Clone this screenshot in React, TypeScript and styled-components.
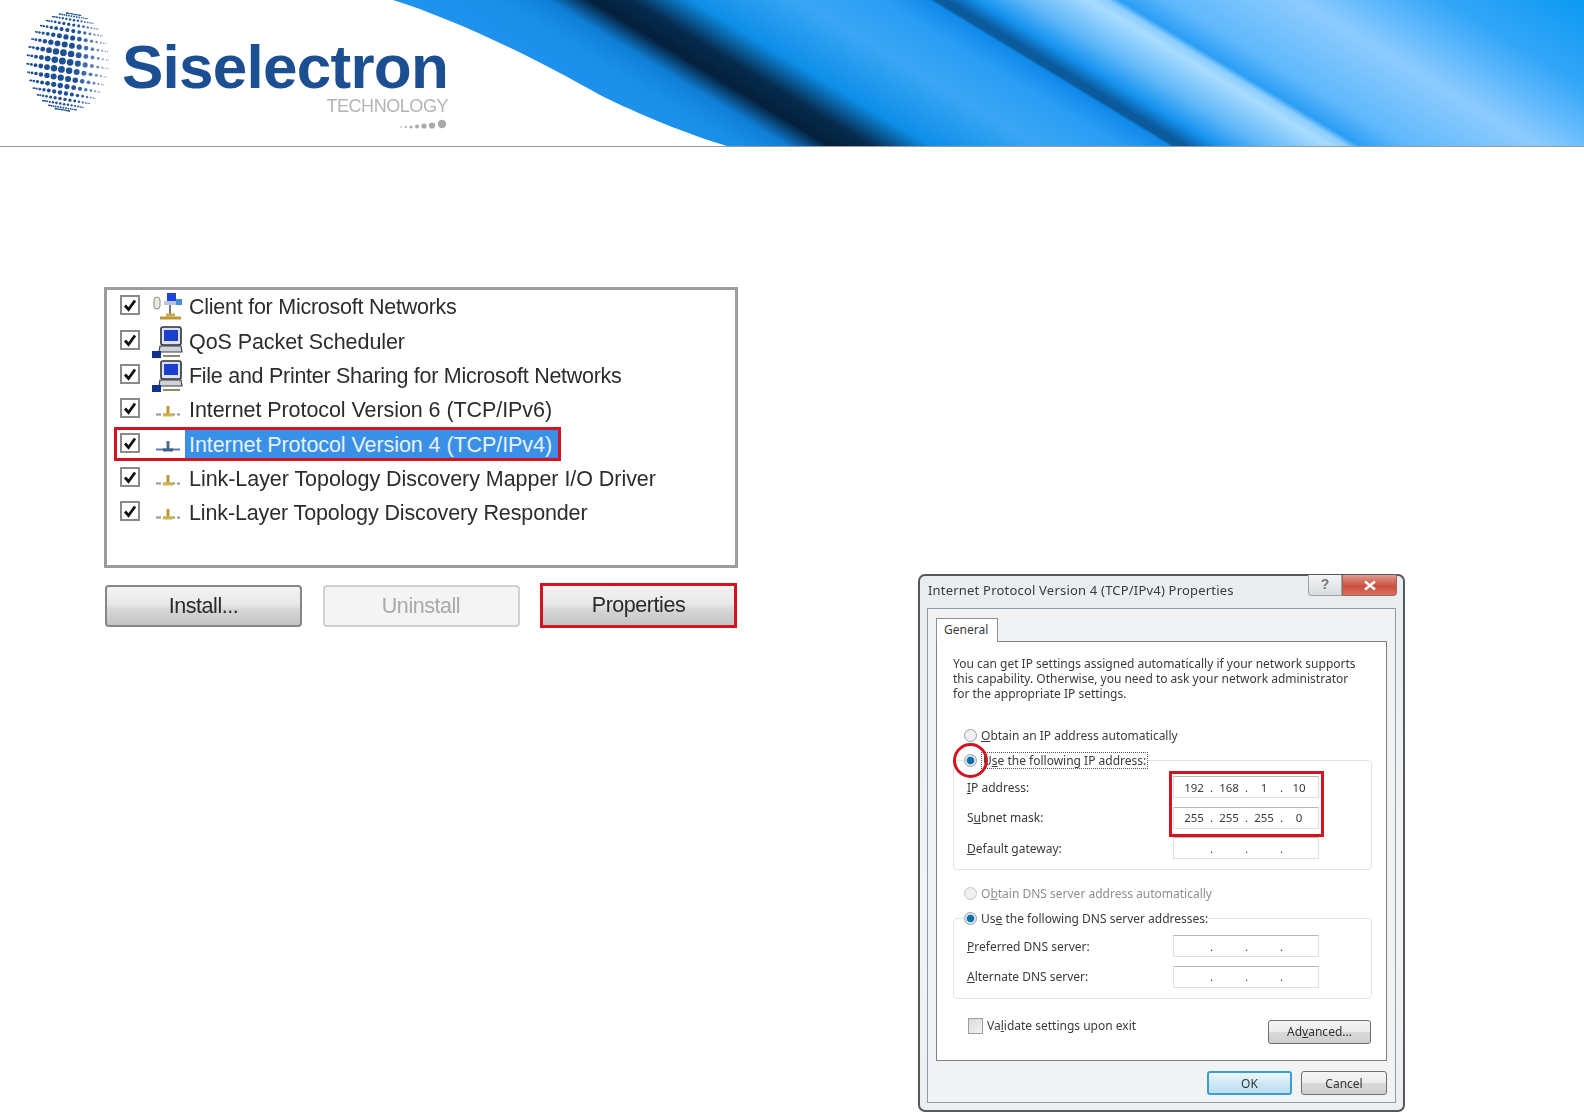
import React from "react";
import styled, { createGlobalStyle } from "styled-components";

const Global = createGlobalStyle`
  html, body { margin: 0; padding: 0; background: #fff; }
  body { width: 1584px; height: 1112px; overflow: hidden; font-family: "Liberation Sans", Arial, sans-serif; }
`;

const Page = styled.div`
  width: 1584px;
  height: 1112px;
  display: flex;
  flex-direction: column;
`;

const Banner = styled.header`
  position: relative;
  height: 146px;
  flex: none;
  display: flex;
  align-items: flex-start;
  padding-left: 26px;
  background: #fff;
  border-bottom: 1px solid #9a9a9a;
  overflow: hidden;
`;

const Swoosh = styled.svg`
  position: absolute;
  inset: 0;
  width: 1584px;
  height: 146px;
`;

const Logo = styled.div`
  position: relative;
  display: flex;
  align-items: flex-start;
  filter: blur(0.5px);
`;

const GlobeMark = styled.svg`
  flex: none;
  margin-top: 12px;
`;

const Brand = styled.div`
  display: flex;
  flex-direction: column;
  align-items: flex-end;
  margin-left: 10px;
  padding-top: 37px;
`;

const BrandName = styled.div`
  font: bold 62px/60px "Liberation Sans", Arial, sans-serif;
  letter-spacing: -0.75px;
  color: #1c4f92;
`;

const BrandSub = styled.div`
  font: 18px/18px "Liberation Sans", Arial, sans-serif;
  letter-spacing: -0.45px;
  color: #b4b4b4;
`;

const SmallDotsMark = styled.svg`
  margin-top: 2px;
`;

const Main = styled.main`
  display: flex;
  align-items: flex-start;
  padding-left: 104px;
`;

const LeftColumn = styled.section`
  width: 634px;
  flex: none;
  margin-top: 140px;
  filter: blur(0.45px);
`;

const ListBox = styled.div`
  box-sizing: border-box;
  height: 281px;
  border: 3px solid #9c9c9c;
  background: #fff;
`;

const Row = styled.div<{ $selected?: boolean; $track: number }>`
  position: relative;
  height: 34.35px;
  display: flex;
  align-items: center;
  padding-left: 13px;
  font-size: 21.5px;
  letter-spacing: ${(p) => p.$track}px;
  color: #2c2c2c;
  ${(p) =>
    p.$selected &&
    `&::after {
      content: "";
      position: absolute;
      left: 7px;
      top: 0;
      width: 447px;
      height: 34px;
      box-sizing: border-box;
      border: 3px solid #d3131f;
    }`}
`;

const ListCheck = styled.span`
  width: 20px;
  height: 20px;
  flex: none;
  box-sizing: border-box;
  border: 2px solid #8a8a8a;
  background: #fff;
  display: flex;
  align-items: center;
  justify-content: center;
  margin-top: -4px;
`;

const IconSlot = styled.span`
  width: 34px;
  height: 32px;
  margin-left: 11px;
  flex: none;
  display: flex;
  align-items: center;
  justify-content: center;
`;

const RowLabel = styled.span<{ $selected?: boolean }>`
  padding: ${(p) => (p.$selected ? "0 7px 0 4px" : "0 14px 0 4px")};
  line-height: 30px;
  white-space: nowrap;
  ${(p) => p.$selected && `background: #3a90e6; color: #e6f2ff;`}
`;

const ButtonRow = styled.div`
  display: flex;
  justify-content: space-between;
  margin-top: 17px;
  padding: 0 1px;
`;

const BigButton = styled.button<{ $disabled?: boolean; $marked?: boolean }>`
  width: 197px;
  height: 42px;
  padding: 0;
  box-sizing: border-box;
  border-radius: 4px;
  border: ${(p) => (p.$marked ? 3 : 2)}px solid
    ${(p) => (p.$marked ? "#d3131f" : p.$disabled ? "#d0d0d0" : "#868686")};
  ${(p) => p.$marked && `border-radius: 0; height: 45px; margin-top: -2px;`}
  background: ${(p) =>
    p.$disabled
      ? "#f4f4f4"
      : "linear-gradient(#f3f3f3 0%, #e8e8e8 45%, #d6d6d6 60%, #c4c4c4 100%)"};
  color: ${(p) => (p.$disabled ? "#a9a9a9" : "#2a2a2a")};
  font: 21.5px "Liberation Sans", Arial, sans-serif;
  letter-spacing: -0.45px;
`;

const Dialog = styled.section`
  width: 487px;
  height: 538px;
  box-sizing: border-box;
  flex: none;
  margin: 427px 0 0 180px;
  padding: 0 7px 9px;
  border: 2px solid #55595e;
  border-radius: 7px;
  background: linear-gradient(#e9edf0, #f3f4f5 60%, #eceef0);
  font: 12px "Noto Sans", sans-serif;
  color: #3a3a3a;
  filter: blur(0.4px);
`;

const TitleBar = styled.div`
  height: 32px;
  display: flex;
  justify-content: space-between;
  align-items: flex-start;
`;

const TitleText = styled.div`
  padding: 6px 0 0 1px;
  font-size: 13px;
  letter-spacing: 0.2px;
  line-height: 17px;
  white-space: nowrap;
`;

const WindowControls = styled.div`
  display: flex;
  margin-top: -1px;
  margin-right: -1px;
`;

const HelpControl = styled.div`
  width: 34px;
  height: 21px;
  box-sizing: border-box;
  border: 1px solid #9aa3ab;
  border-top: 0;
  border-radius: 0 0 0 4px;
  background: linear-gradient(#f3f4f5, #d8dcdf);
  color: #777;
  font: bold 14px/19px "Liberation Sans", sans-serif;
  text-align: center;
`;

const CloseControl = styled.div`
  width: 55px;
  height: 21px;
  box-sizing: border-box;
  border: 1px solid #a0655c;
  border-top: 0;
  border-radius: 0 0 4px 0;
  background: linear-gradient(#e39a8e, #c9503f 55%, #d9705e);
  display: flex;
  align-items: center;
  justify-content: center;
`;

const Frame = styled.div`
  box-sizing: border-box;
  height: 495px;
  border: 1px solid #8e9aa4;
  padding: 9px 8px 0;
  background: #f1f2f3;
`;

const Tab = styled.div`
  box-sizing: border-box;
  position: relative;
  z-index: 1;
  width: 62px;
  height: 24px;
  margin-bottom: -1px;
  border: 1px solid #8e8e8e;
  border-bottom: 0;
  background: #fff;
  padding-left: 7px;
  line-height: 22px;
  font-size: 12px;
`;

const TabPage = styled.div`
  box-sizing: border-box;
  height: 420px;
  border: 1px solid #808080;
  background: #fff;
  padding: 14px 14px 0 16px;
`;

const Intro = styled.p`
  margin: 0;
  font-size: 12px;
  line-height: 15.2px;
  white-space: nowrap;
`;

const OptionRow = styled.div<{ $off?: boolean }>`
  height: 20px;
  display: flex;
  align-items: center;
  gap: 4px;
  padding-left: 11px;
  white-space: nowrap;
  color: ${(p) => (p.$off ? "#8f8f8f" : "inherit")};
  margin-top: 23.5px;
`;

const DnsOptionRow = styled(OptionRow)`
  margin-top: 13px;
`;

const Radio = styled.span<{ $on?: boolean; $marked?: boolean; $off?: boolean }>`
  position: relative;
  width: 13px;
  height: 13px;
  flex: none;
  box-sizing: border-box;
  border-radius: 50%;
  border: 1px solid ${(p) => (p.$off ? "#c8c8c8" : "#9a9fa5")};
  background: ${(p) =>
    p.$on ? "radial-gradient(circle, #0e6fb0 0 3.4px, #dfe8ee 4.2px)" : "#f0f0f0"};
  ${(p) =>
    p.$marked &&
    `&::after {
      content: "";
      position: absolute;
      left: -12px;
      top: -12px;
      width: 35px;
      height: 35px;
      box-sizing: border-box;
      border: 3px solid #d3131f;
      border-radius: 50%;
    }`}
`;

const Group = styled.fieldset<{ $pad: number }>`
  margin: 5px 0 0;
  padding: ${(p) => p.$pad}px 0 5.5px 0;
  border: 1px solid #dfe4e8;
  border-radius: 4px;
  min-width: 0;
`;

const GroupLegend = styled.legend`
  padding: 0;
  margin-left: 10px;
  height: 20px;
  display: flex;
  align-items: center;
  gap: 4px;
  white-space: nowrap;
`;

const Focused = styled.span`
  border: 1px dotted #555;
  padding: 0 1px;
  line-height: 15px;
`;

const Marked = styled.div`
  position: relative;
  &::after {
    content: "";
    position: absolute;
    right: 47px;
    top: -1px;
    width: 155px;
    height: 66px;
    box-sizing: border-box;
    border: 3px solid #d3131f;
  }
`;

const FieldRow = styled.div`
  height: 30.5px;
  display: flex;
  align-items: center;
  justify-content: space-between;
  padding: 0 52px 0 13px;
`;

const IpInput = styled.div`
  box-sizing: border-box;
  width: 146px;
  height: 22px;
  display: flex;
  align-items: center;
  padding-left: 8px;
  border: 1px solid #dde1e5;
  border-top-color: #b4b8bc;
  background: #fff;
  font-size: 11.5px;
`;

const Octet = styled.span`
  width: 24px;
  text-align: center;
`;

const Dot = styled.span`
  width: 11px;
  text-align: center;
`;

const BottomRow = styled.div`
  display: flex;
  justify-content: space-between;
  align-items: flex-start;
  margin-top: 19px;
  padding: 0 1px 0 15px;
`;

const ValidateLabel = styled.label`
  display: flex;
  align-items: flex-start;
  gap: 4px;
  line-height: 16px;
`;

const SmallCheck = styled.span`
  width: 15px;
  height: 16px;
  box-sizing: border-box;
  border: 1px solid #9d9d9d;
  background: linear-gradient(135deg, #d8d8d8, #f4f4f4);
`;

const DialogButton = styled.button<{ $w: number; $primary?: boolean }>`
  width: ${(p) => p.$w}px;
  height: 24px;
  padding: 0;
  box-sizing: border-box;
  border: ${(p) => (p.$primary ? "2px solid #3c9fc9" : "1px solid #6f6f6f")};
  border-radius: 3px;
  background: ${(p) =>
    p.$primary
      ? "linear-gradient(#eef8fd, #cfe8f6 50%, #bcdff2)"
      : "linear-gradient(#f4f4f4, #ececec 48%, #d8d8d8 52%, #cfcfcf)"};
  color: #333;
  font: 12px "Noto Sans", sans-serif;
`;

const AdvancedButton = styled(DialogButton)`
  margin-top: 2px;
`;

const Footer = styled.div`
  display: flex;
  justify-content: flex-end;
  gap: 9px;
  margin-top: 10px;
`;

const Tick = () => (
  <svg width="14" height="14" viewBox="0 0 14 14">
    <path d="M2 7.5 L5.5 11.5 L12 2.5" fill="none" stroke="#111" strokeWidth="2.8" />
  </svg>
);

const Net = ({ blue }: { blue?: boolean }) => (
  <svg width="28" height="16" viewBox="0 0 28 16">
    <path d="M2 12.5 H26" stroke={blue ? "#5a7fa8" : "#8a94a0"} strokeWidth="2" strokeDasharray={blue ? "none" : "5 2"} />
    <path d="M14 4 V12" stroke={blue ? "#4a6f98" : "#b89a3a"} strokeWidth="3" />
    <path d="M9 13 H19" stroke={blue ? "#3d6390" : "#d2b34a"} strokeWidth="3" />
  </svg>
);

const Computer = () => (
  <svg width="34" height="34" viewBox="0 0 34 34">
    <rect x="10" y="2" width="20" height="18" rx="2" fill="#dfe2ea" stroke="#2a2f3c" strokeWidth="1.6" />
    <rect x="13" y="5" width="14" height="11" fill="#1b3fd0" />
    <path d="M9 21 H30 L31 27 H8 Z" fill="#cfd2d6" stroke="#3a3f4a" strokeWidth="1.2" />
    <rect x="1" y="26" width="9" height="7" fill="#12308e" />
    <path d="M12 31 H29" stroke="#8a8a66" strokeWidth="2" />
  </svg>
);

const ClientIcon = () => (
  <svg width="30" height="32" viewBox="0 0 30 32">
    <rect x="1" y="6" width="6" height="12" rx="3" fill="#e8e8e0" stroke="#8c8c80" />
    <rect x="14" y="2" width="9" height="8" fill="#1d46d8" />
    <rect x="23" y="8" width="6" height="6" fill="#4a8be0" />
    <rect x="11" y="10" width="12" height="4" fill="#b8c6e0" />
    <path d="M17 14 V25" stroke="#777" strokeWidth="2" />
    <path d="M7 27 H28" stroke="#b89a3a" strokeWidth="3" />
    <path d="M13 24 H22" stroke="#c8aa4a" strokeWidth="3" />
  </svg>
);

const Globe = () => {
  const dots: { x: number; y: number; r: number; o: number }[] = [];
  const tilt = (8 * Math.PI) / 180;
  for (let la = -80; la <= 80; la += 10) {
    for (let lo = -85; lo <= 90; lo += 11) {
      const a = (la * Math.PI) / 180;
      const b = (lo * Math.PI) / 180;
      const px = Math.cos(a) * Math.sin(b);
      const py = Math.sin(a);
      const x = px * Math.cos(tilt) - py * Math.sin(tilt);
      const y = px * Math.sin(tilt) + py * Math.cos(tilt);
      const d = Math.hypot(x + 0.02, y);
      const fade = Math.max(0, 1 - (x + 1) / 2.3);
      dots.push({
        x: 42 + x * 41,
        y: 50 + y * 49,
        r: 0.5 + 3.3 * Math.max(0.06, Math.cos(d * 1.5)) * (0.6 + fade * 0.5),
        o: Math.min(1, 0.25 + fade * 1.5),
      });
    }
  }
  return (
    <GlobeMark width="86" height="100" viewBox="0 0 86 100">
      {dots.map((d, i) => (
        <circle key={i} cx={d.x} cy={d.y} r={d.r} fill="#1c4f96" opacity={d.o} />
      ))}
    </GlobeMark>
  );
};

const SmallDots = () => (
  <SmallDotsMark width="50" height="14" viewBox="0 0 50 14">
    {[
      [3, 10, 0.8],
      [8, 10, 1.1],
      [13, 10, 1.5],
      [19, 9.5, 2],
      [26, 9, 2.6],
      [34, 8.5, 3.1],
      [44, 7, 4.2],
    ].map(([x, y, r], i) => (
      <circle key={i} cx={x} cy={y} r={r} fill="#a9a9a9" />
    ))}
  </SmallDotsMark>
);

const XIcon = () => (
  <svg width="14" height="11" viewBox="0 0 14 11">
    <path d="M2 1.5 L12 9.5 M12 1.5 L2 9.5" stroke="#fff" strokeWidth="2.4" />
  </svg>
);

const rows = [
  { label: "Client for Microsoft Networks", icon: <ClientIcon />, track: -0.25 },
  { label: "QoS Packet Scheduler", icon: <Computer />, track: -0.08 },
  { label: "File and Printer Sharing for Microsoft Networks", icon: <Computer />, track: -0.28 },
  { label: "Internet Protocol Version 6 (TCP/IPv6)", icon: <Net />, track: -0.07 },
  { label: "Internet Protocol Version 4 (TCP/IPv4)", icon: <Net blue />, selected: true, track: -0.07 },
  { label: "Link-Layer Topology Discovery Mapper I/O Driver", icon: <Net />, track: -0.05 },
  { label: "Link-Layer Topology Discovery Responder", icon: <Net />, track: -0.13 },
];

const Ip = ({ v }: { v?: string[] }) => {
  const o = v ?? ["", "", "", ""];
  return (
    <IpInput>
      <Octet>{o[0]}</Octet>
      <Dot>.</Dot>
      <Octet>{o[1]}</Octet>
      <Dot>.</Dot>
      <Octet>{o[2]}</Octet>
      <Dot>.</Dot>
      <Octet>{o[3]}</Octet>
    </IpInput>
  );
};

export default function App() {
  return (
    <Page>
      <Global />
      <Banner>
        <Swoosh viewBox="0 0 1584 146">
          <defs>
            <linearGradient
              id="wave"
              gradientUnits="userSpaceOnUse"
              x1="393"
              y1="0"
              x2="1584"
              y2="0"
              gradientTransform="skewX(58.7)"
            >
              <stop offset="0" stopColor="#1f93ee" />
              <stop offset="0.09" stopColor="#1a8fe8" />
              <stop offset="0.13" stopColor="#0f7fd6" />
              <stop offset="0.165" stopColor="#04203c" />
              <stop offset="0.2" stopColor="#062b4c" />
              <stop offset="0.25" stopColor="#0d8fe8" />
              <stop offset="0.34" stopColor="#3aa6f4" />
              <stop offset="0.41" stopColor="#2a9df4" />
              <stop offset="0.45" stopColor="#0f8aea" />
              <stop offset="0.455" stopColor="#0a5a9c" />
              <stop offset="0.465" stopColor="#0a5a9c" />
              <stop offset="0.49" stopColor="#1593ef" />
              <stop offset="0.53" stopColor="#60b8f8" />
              <stop offset="0.585" stopColor="#a9dcff" />
              <stop offset="0.6" stopColor="#8accff" />
              <stop offset="0.61" stopColor="#2b9ef5" />
              <stop offset="0.65" stopColor="#5fb8fb" />
              <stop offset="0.76" stopColor="#8ccbff" />
              <stop offset="0.88" stopColor="#33a6f8" />
              <stop offset="1" stopColor="#0a9af2" />
            </linearGradient>
          </defs>
          <path
            d="M393 0 C 450 18, 520 50, 600 95 C 640 115, 690 135, 727 146 H1584 V0 Z"
            fill="url(#wave)"
          />
        </Swoosh>
        <Logo>
          <Globe />
          <Brand>
            <BrandName>Siselectron</BrandName>
            <BrandSub>TECHNOLOGY</BrandSub>
            <SmallDots />
          </Brand>
        </Logo>
      </Banner>
      <Main>
        <LeftColumn>
          <ListBox>
            {rows.map((r) => (
              <Row key={r.label} $selected={r.selected} $track={r.track}>
                <ListCheck>
                  <Tick />
                </ListCheck>
                <IconSlot>{r.icon}</IconSlot>
                <RowLabel $selected={r.selected}>{r.label}</RowLabel>
              </Row>
            ))}
          </ListBox>
          <ButtonRow>
            <BigButton>Install...</BigButton>
            <BigButton $disabled>Uninstall</BigButton>
            <BigButton $marked>Properties</BigButton>
          </ButtonRow>
        </LeftColumn>
        <Dialog>
          <TitleBar>
            <TitleText>Internet Protocol Version 4 (TCP/IPv4) Properties</TitleText>
            <WindowControls>
              <HelpControl>?</HelpControl>
              <CloseControl>
                <XIcon />
              </CloseControl>
            </WindowControls>
          </TitleBar>
          <Frame>
            <Tab>General</Tab>
            <TabPage>
              <Intro>
                You can get IP settings assigned automatically if your network supports
                <br />
                this capability. Otherwise, you need to ask your network administrator
                <br />
                for the appropriate IP settings.
              </Intro>
              <OptionRow>
                <Radio />
                <span>
                  <u>O</u>btain an IP address automatically
                </span>
              </OptionRow>
              <Group $pad={2}>
                <GroupLegend>
                  <Radio $on $marked />
                  <Focused>
                    U<u>s</u>e the following IP address:
                  </Focused>
                </GroupLegend>
                <Marked>
                  <FieldRow>
                    <span>
                      <u>I</u>P address:
                    </span>
                    <Ip v={["192", "168", "1", "10"]} />
                  </FieldRow>
                  <FieldRow>
                    <span>
                      S<u>u</u>bnet mask:
                    </span>
                    <Ip v={["255", "255", "255", "0"]} />
                  </FieldRow>
                </Marked>
                <FieldRow>
                  <span>
                    <u>D</u>efault gateway:
                  </span>
                  <Ip />
                </FieldRow>
              </Group>
              <DnsOptionRow $off>
                <Radio $off />
                <span>
                  O<u>b</u>tain DNS server address automatically
                </span>
              </DnsOptionRow>
              <Group $pad={3}>
                <GroupLegend>
                  <Radio $on />
                  <span>
                    Us<u>e</u> the following DNS server addresses:
                  </span>
                </GroupLegend>
                <FieldRow>
                  <span>
                    <u>P</u>referred DNS server:
                  </span>
                  <Ip />
                </FieldRow>
                <FieldRow>
                  <span>
                    <u>A</u>lternate DNS server:
                  </span>
                  <Ip />
                </FieldRow>
              </Group>
              <BottomRow>
                <ValidateLabel>
                  <SmallCheck />
                  <span>
                    Va<u>l</u>idate settings upon exit
                  </span>
                </ValidateLabel>
                <AdvancedButton $w={103}>
                  Ad<u>v</u>anced...
                </AdvancedButton>
              </BottomRow>
            </TabPage>
            <Footer>
              <DialogButton $w={85} $primary>
                OK
              </DialogButton>
              <DialogButton $w={86}>Cancel</DialogButton>
            </Footer>
          </Frame>
        </Dialog>
      </Main>
    </Page>
  );
}
